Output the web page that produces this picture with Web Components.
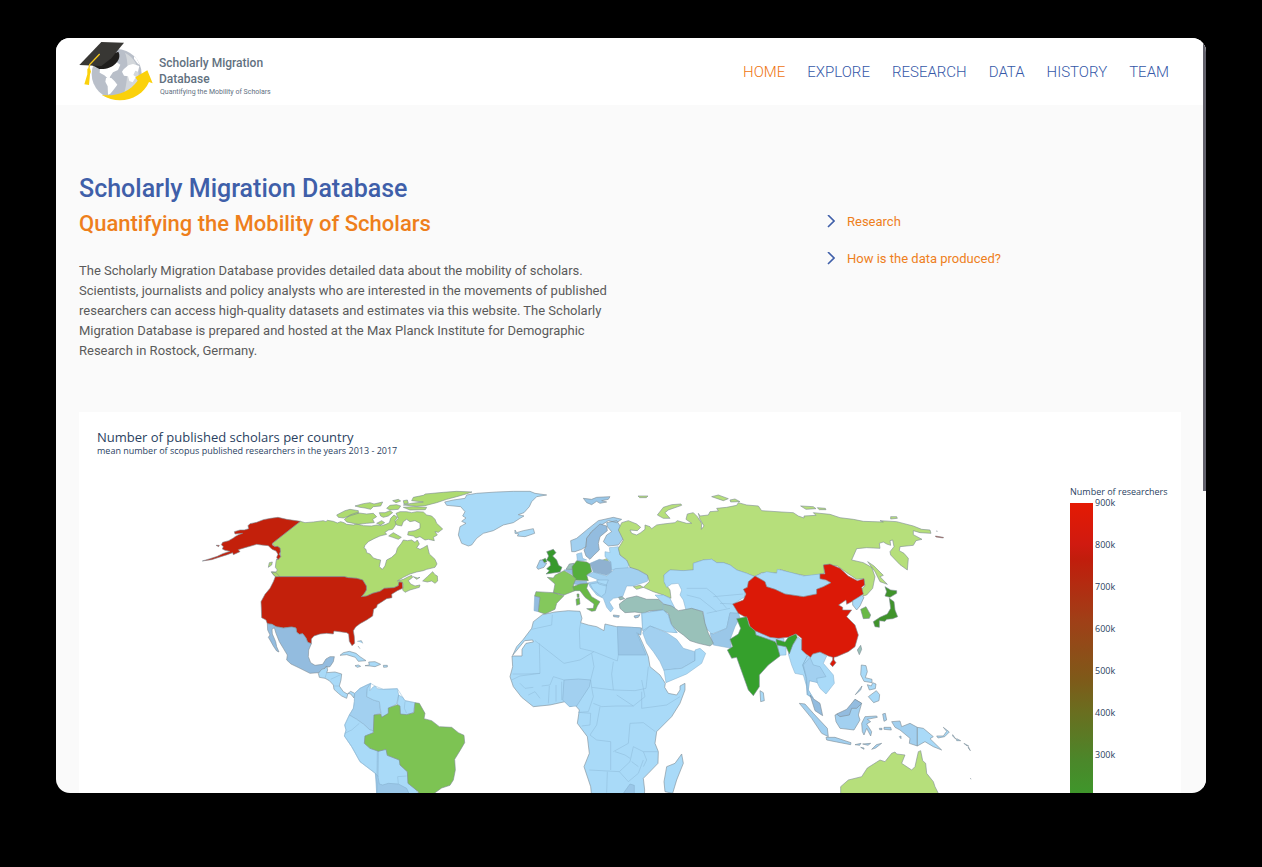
<!DOCTYPE html>
<html lang="en">
<head>
<meta charset="utf-8">
<title>Scholarly Migration Database</title>
<style>
body{margin:0;background:#000;font-family:Roboto,"Liberation Sans",sans-serif}
</style>
</head>
<body>
<smd-window>
  <smd-header slot="header">
    <smd-logo slot="logo"></smd-logo>
    <smd-nav-link current>HOME</smd-nav-link>
    <smd-nav-link>EXPLORE</smd-nav-link>
    <smd-nav-link>RESEARCH</smd-nav-link>
    <smd-nav-link>DATA</smd-nav-link>
    <smd-nav-link>HISTORY</smd-nav-link>
    <smd-nav-link>TEAM</smd-nav-link>
  </smd-header>
  <smd-intro>
    <span slot="title">Scholarly Migration Database</span>
    <span slot="subtitle">Quantifying the Mobility of Scholars</span>
    <span>The Scholarly Migration Database provides detailed data about the mobility of scholars.<br>Scientists, journalists and policy analysts who are interested in the movements of published<br>researchers can access high-quality datasets and estimates via this website. The Scholarly<br>Migration Database is prepared and hosted at the Max Planck Institute for Demographic<br>Research in Rostock, Germany.</span>
    <smd-more-link slot="links">Research</smd-more-link>
    <smd-more-link slot="links">How is the data produced?</smd-more-link>
  </smd-intro>
  <smd-map-card>
    <span slot="title">Number of published scholars per country</span>
    <span slot="subtitle">mean number of scopus published researchers in the years 2013 - 2017</span>
    <smd-world-map></smd-world-map>
    <smd-legend slot="legend" ticks="900k 800k 700k 600k 500k 400k 300k">Number of researchers</smd-legend>
  </smd-map-card>
</smd-window>

<script>
const define = (name, html, setup) => customElements.define(name, class extends HTMLElement {
  constructor() {
    super();
    this.attachShadow({ mode: 'open' }).innerHTML = html;
  }
  connectedCallback() { if (setup) setup(this, this.shadowRoot); }
});

define('smd-window', `
<style>
:host{display:block;box-sizing:border-box;height:100vh;padding:38px 56px 74px}
.frame{display:grid;grid-template-columns:minmax(0,1fr) 3px;height:100%;overflow:hidden;border-radius:14px;background:#fafafa}
.page{overflow:hidden}
main{padding:66px 22px 0 23px}
.track{background:#fafafa}
.thumb{height:60%;background:#62616b}
</style>
<div class="frame">
  <div class="page"><slot name="header"></slot><main><slot></slot></main></div>
  <div class="track"><div class="thumb"></div></div>
</div>`);

define('smd-header', `
<style>
:host{display:block;background:#fff}
header{display:flex;justify-content:space-between;align-items:center;height:67px;padding:0 34px 0 22px}
nav{display:flex;gap:22px}
</style>
<header><slot name="logo"></slot><nav aria-label="Main"><slot></slot></nav></header>`);

define('smd-nav-link', `
<style>
:host{display:block}
a{color:#3558a8;font-size:15px;line-height:20px;font-weight:300;text-decoration:none}
:host([current]) a{color:#ee7410}
</style>
<a href="#"><slot></slot></a>`, (el, root) => {
  if (el.hasAttribute('current')) root.querySelector('a').setAttribute('aria-current', 'page');
});

define('smd-logo', `
<style>
:host{display:block}
a{display:flex;align-items:center;gap:5px;color:#62717f;text-decoration:none}
svg{display:block;width:76px;height:62px}
.words{display:grid;padding-top:8px}
b{font-size:12px;line-height:16px;font-weight:500}
small{font-size:7px;line-height:10px;padding:0 0 0 1px}
</style>
<a href="#">
<svg viewBox="84 33 228 186" aria-hidden="true">
  <circle cx="200" cy="132" r="75" fill="#b9bfc9"/>
  <path d="M225 68A75 75 0 0 1 217 205C230 180 240 100 225 68Z" fill="#d3d7db"/>
  <path d="M252 78l8 8 10 20-8-6-10-14zM150 115l16-11 8 5 22-15 15 10-7 16-15 7-10 15 8 8-11-2-13-12-14-8zM168 144l16 0 10 10 8 10-10 14-11 13-7 3-1-25-7-14zM221 118l14-12 14-4 19 6-4 17-8-3-6 13 8 6-10 16-10-4-4-14-12-2-6-12z" fill="#fff"/>
  <path d="M155 195C195 200 237 188 263 152L256 142 292 121 308 160 297 156C276 205 210 229 155 195Z" fill="#fbd10b"/>
  <path d="M126 105L142 91 205 65C218 89 188 120 148 117Z" fill="#1f1e1c"/>
  <path d="M154 36L222 38 184 85 154 108 88 105Z" fill="#383734"/>
  <path d="M149 72L119 104 116 118" fill="none" stroke="#f5c71b" stroke-width="4"/>
  <path d="M112 116l8-1 3 10-3 8-3 32-14-2 9-30z" fill="#fbd10b"/>
</svg>
<span class="words"><b>Scholarly Migration</b><b>Database</b><small>Quantifying the Mobility of Scholars</small></span>
</a>`);

define('smd-intro', `
<style>
:host{display:grid;grid-template-columns:minmax(0,1fr) 354px;padding-bottom:51px}
h1,h2,p{margin:0;white-space:nowrap}
h1{color:#3f5fa9;font-size:25px;line-height:36px;font-weight:500}
h2{color:#ee7f1c;font-size:22px;line-height:34px;font-weight:500}
p{margin-top:20px;color:#5a5a5a;font-size:13px;line-height:20px}
.links{padding-top:32px}
</style>
<section><h1><slot name="title"></slot></h1><h2><slot name="subtitle"></slot></h2><p><slot></slot></p></section>
<div class="links"><slot name="links"></slot></div>`);

define('smd-more-link', `
<style>
:host{display:block}
a{display:flex;align-items:center;gap:12px;height:37px;color:#ee7f1c;font-size:13px;text-decoration:none}
svg{width:8px;height:14px}
</style>
<a href="#"><svg viewBox="0 0 8 14" aria-hidden="true"><path d="M1 0L7 6 1 12" fill="none" stroke="#3f5fa9" stroke-width="1.6"/></svg><slot></slot></a>`);

define('smd-map-card', `
<style>
:host{display:block;background:#fff;padding:18px 12px 0 18px;font-family:"Open Sans","Noto Sans",sans-serif;color:#2a3f5f}
h3,p{margin:0;font-weight:400}
h3{font-size:13px;line-height:15px}
p{font-size:9px;line-height:11px}
.chart{display:grid;grid-template-columns:minmax(0,1fr) 99px;padding-top:4px}
</style>
<h3><slot name="title"></slot></h3><p><slot name="subtitle"></slot></p>
<div class="chart"><slot></slot><slot name="legend"></slot></div>`);

define('smd-legend', `
<style>
:host{display:block;padding-top:27px;font-size:9px;white-space:nowrap}
.title{line-height:10px;padding-bottom:6px}
.scale{display:grid;grid-template-columns:23px 1fr;gap:2px}
.bar{min-height:340px;background:linear-gradient(#e41a03 0,#cf1a10 42px,#c11d0c 56px,#a03f17 117px,#7e5a19 177px,#6b6d1f 207px,#4b872a 257px,#3f962b 290px,#35a02c)}
ul{list-style:none;margin:-5px 0 0;padding:0}
li{height:42px;line-height:10px}
</style>
<div class="title"><slot></slot></div>
<div class="scale"><div class="bar"></div><ul></ul></div>`, (el, root) => {
  root.querySelector('ul').innerHTML = el.getAttribute('ticks').split(' ').map(t => `<li>${t}</li>`).join('');
});

define('smd-world-map', `
<style>
:host{display:block}
svg{display:block;width:100%}
path{stroke:#7d8b93;stroke-width:.6;stroke-linejoin:round;vector-effect:non-scaling-stroke}
.in path{stroke:#82adcb;stroke-width:.5}
.us{fill:#c3200b}.ca{fill:#aedb70}.ru{fill:#b6df7b}.mx{fill:#93bcdf}.lo{fill:#a9daf8}.l2{fill:#a2d0f0}.l3{fill:#9ac7e8}
.br{fill:#7dc353}.uk{fill:#37992c}.de{fill:#55ae3c}.fr{fill:#84c85c}.it{fill:#69b946}.tr{fill:#99c1b9}.cn{fill:#db1907}.in1{fill:#35a02c}.jp{fill:#3f932a}
.line{fill:none}
path.line{stroke:#8db9d6;stroke-width:.5}
</style>
<svg viewBox="97 460 973 370" role="img" aria-label="World map of published scholars">
<g transform="translate(190 480) scale(.33333)">
 <path class="ca" d="M331 124L345 128 370 126 400 122 408 125 412 121 430 124 442 129 452 125 462 128 470 133 490 135 500 132 520 137 545 138 560 135 575 137 588 133 598 128 602 115 612 105 622 112 615 122 620 128 615 138 608 148 596 150 585 157 590 163 570 168 552 176 535 185 525 196 522 204 528 208 530 218 540 222 550 234 562 238 572 240 568 260 577 268 585 258 590 240 605 232 618 220 622 205 634 190 640 180 652 182 665 180 675 187 682 180 688 192 680 203 690 208 700 203 712 196 714 205 718 222 735 238 741 252 735 262 710 268 700 272 680 276 660 282 640 292 622 303 640 298 655 290 665 286 668 292 655 302 662 312 675 318 690 315 688 322 660 330 645 337 638 330 640 315 637 307 627 306 625 317 612 323 583 325 570 334 548 340 530 348 514 350 523 340 529 330 529 318 518 300 500 295 475 293 463 290 256 290 248 282 244 275 258 276 262 270 256 262 258 245 260 237 264 239 272 230 270 204 262 199 255 200 247 190Z"/>
 <path class="ca" d="M712 290L728 275 735 284 742 288 743 303 735 310 725 303 712 306 698 303ZM670 290L682 294 690 292 680 298ZM618 100L630 95 650 95 665 98 680 95 700 96 710 105 725 108 735 118 740 130 758 147 745 157 735 155 742 165 730 172 733 182 715 178 705 180 690 170 678 174 670 168 653 165 655 155 675 152 690 145 690 130 675 122 660 125 650 118 640 125 635 138 620 135 615 125 625 115ZM440 105L465 92 480 88 505 92 505 100 485 106 460 114 445 112ZM463 118L480 105 500 98 530 102 550 100 560 110 548 118 553 128 530 130 505 133 480 128 470 126ZM495 78L520 71 540 68 552 72 578 66 572 78 550 80 542 88 525 84 510 82ZM568 98L585 98 600 92 608 98 595 108 580 112 572 108ZM608 62L625 58 632 63 618 68ZM590 85L600 76 620 74 632 78 625 88 600 90ZM640 62L652 60 655 70 642 72ZM560 130L575 122 584 128 572 135ZM665 62L670 52 700 46 706 42 760 37 800 34 846 36 825 43 800 50 770 58 740 68 705 77 680 79 640 75 665 70 700 66ZM640 82L670 80 710 82 706 89 660 90ZM596 168L610 158 622 165 634 172 625 178 608 172ZM235 262L238 248 247 246 245 255ZM245 277L258 278 268 288 268 300 256 290Z"/>
 <path class="us" d="M37 243L60 236 82 229 98 221 120 214 105 211 97 207 100 200 94 194 98 187 116 182 130 174 135 170 146 164 158 160 135 162 133 155 150 150 163 150 176 146 174 137 180 131 200 127 220 119 242 115 264 112 290 118 331 124 247 190 247 195 255 200 262 199 270 204 271 215 268 222 272 230 264 239 260 232 264 223 258 213 246 208 235 197 214 195 200 193 180 199 165 203 145 209 150 215 130 224 128 218 112 224 90 231 65 239ZM78 196l10 0-2 4zM256 290L463 290 475 293 500 295 518 300 529 318 529 330 523 340 514 350 530 348 548 340 570 334 583 325 612 323 625 317 627 306 637 307 638 325 622 332 605 343 606 353 590 356 575 366 562 374 560 382 551 388 548 408 530 420 510 431 497 441 490 452 493 470 494 490 486 497 478 484 476 462 470 458 455 456 432 453 430 462 410 460 390 462 372 468 364 477 364 491 353 487 348 474 338 461 328 463 320 457 318 444 305 441 280 444 258 440 246 433 232 431 228 420 215 413 214 385 213 365 225 343 240 325 250 305Z"/>
 <path class="mx" d="M232 431L246 433 258 440 280 444 305 441 318 444 320 457 328 463 338 461 348 474 353 487 364 491 356 510 355 530 362 548 375 556 398 553 408 537 420 530 433 530 430 545 420 560 405 562 400 575 385 578 360 580 330 565 303 552 290 540 292 525 280 505 268 485 258 460 253 443 246 448 247 462 257 485 260 500 267 516 260 513 250 498 240 480 235 472 240 465 233 450Z"/>
</g>
<g transform="translate(310 630) scale(.33333)">
 <path class="lo" d="M25 130L35 118 45 115 50 108 53 120 50 128 75 126 95 132 93 150 88 168 100 185 112 192 122 184 134 190 132 204 122 192 114 190 110 205 95 198 85 190 72 178 70 165 58 152 45 145 28 142ZM90 76L100 68 118 64 138 70 150 80 168 92 145 94 136 82 110 74ZM165 107L178 105 176 96 195 95 212 103 195 110 180 108ZM135 107l10-2 7 4-10 3zM220 106l12 0 0 5-11 1zM142 34l12-2 4 8M144 48l6 8"/>
 <g class="in">
 <path class="l2" d="M134 190L150 175 170 165 182 160 172 175 170 200 190 210 208 215 212 250 192 255 190 302 180 300 160 282 140 268 118 255 130 235 133 215Z"/>
 <path class="lo" d="M182 160L180 182 188 172 195 168 202 176 220 178 262 176 266 195 260 222 235 235 240 252 215 262 208 215 190 210 170 200 172 175ZM266 195L278 202 285 212 315 218 310 248 290 254 272 255 268 230 262 222ZM118 255L140 268 160 282 180 300 190 302 188 310 165 318 163 340 180 355 205 362 204 440 196 430 150 395 125 350 103 318 108 300 104 285ZM202 364L228 358 232 376 268 390 270 405 292 425 294 460 318 478 340 520 200 520Z"/>
 <path class="l3" d="M196 430L204 440 208 462 218 465 235 460 265 462 290 475 310 520 202 520Z"/></g>
 <path class="br" d="M192 255L212 252 215 262 235 250 235 234 262 224 270 228 271 252 290 254 312 248 315 218 328 220 345 250 342 266 365 272 388 290 425 292 445 308 462 316 464 338 450 362 434 388 436 420 430 450 420 466 395 474 370 492 360 520 330 520 325 485 294 460 292 425 270 405 268 390 232 376 228 358 205 364 180 355 163 340 165 318 190 308Z"/>
 <path class="line" d="M134 190L150 175 182 160 195 168 220 178 262 176 285 212 315 218M134 190L133 215 130 235 118 255 104 285 108 300 103 318 125 350 150 395 196 430 202 460 202 500M104 310L125 300 148 280M263 440L265 462M263 440L290 438M285 215L283 235 290 250M45 145L50 128M62 148L92 134M72 168L88 168"/>
</g>
<g transform="translate(440 480) scale(.33333)">
 <path class="lo" d="M14 66L40 60 75 55 80 45 110 40 170 36 220 34 270 34 285 40 320 45 290 50 275 65 268 80 252 98 235 104 252 108 240 115 220 128 190 135 160 152 130 160 110 175 95 195 85 198 65 190 55 165 60 140 78 130 65 124 78 114 68 108 75 95 62 80 20 76ZM225 150L230 158 250 152 280 146 284 160 255 170 232 168 236 162 225 160Z"/>
 <path class="l3" d="M430 55L455 58 470 52 510 50 505 58 485 62 500 66 480 70 470 64 455 74 440 68Z"/>
 <path class="ru" d="M594 48l30 0-5 5-20 0zM484 242l16-6 6 8z"/>
 <path class="uk" d="M320 215L340 208 348 218 338 228 350 240 356 256 366 262 360 276 318 282 328 272 320 266 332 256 330 246 320 240 326 228ZM306 240l10-5 5 10-9 3z"/>
 <path class="l2" d="M290 262L300 240 308 240 312 248 320 250 312 262 294 268ZM395 215L392 182 410 175 440 150 475 122 520 112 545 118 530 128 505 122 480 138 455 155 440 175 438 200 425 208 405 215ZM500 128L530 122 545 145 550 175 535 195 505 198 490 185 500 165 515 155 502 140Z"/>
 <path class="mx" d="M455 155L480 132 500 138 502 152 480 170 475 190 478 210 462 225 450 238 438 228 432 210 438 200 440 175Z"/>
 <g class="in">
 <path class="l2" d="M412 242L410 222 425 218 428 235 440 240 420 243Z"/>
 <path class="lo" d="M508 203L535 200 540 225 570 250 560 268 515 270 512 245 495 230 495 215 510 218Z"/>
 <path class="l2" d="M440 285L460 276 500 288 525 266 580 262 625 288 622 304 580 318 560 318 548 350 520 355 508 366 520 385 512 396 500 382 490 355 470 345 450 320 445 308 480 302Z"/>
 <path class="lo" d="M450 312L475 308 500 315 496 340 484 350 460 330ZM470 300L505 300 498 318 476 312Z"/>
 <path class="mx" style="fill:#8fb1d0" d="M450 250L478 238 512 245 515 275 500 286 460 276Z"/>
 <path class="mx" d="M372 270L398 268 400 285ZM395 312L402 302 440 304 442 310 418 314ZM284 348L300 352 295 395 282 392Z"/></g>
 <path class="tr" d="M378 268L388 252 402 250 398 268Z"/>
 <path class="de" d="M396 260L410 242 440 246 450 252 455 275 440 285 445 302 400 300Z"/>
 <path class="fr" d="M322 292L340 294 345 286 372 272 395 285 408 296 400 315 405 332 372 345 340 338 345 312ZM288 335L340 338 372 347 350 370 345 388 315 402 295 395 300 352 284 348Z"/>
 <path class="it" d="M398 320L420 312 445 310 440 325 455 350 480 365 472 378 466 392 455 394 440 386 460 385 462 372 435 352 420 332 402 332ZM408 358l10-4 2 18-10 4zM411 342l6 0 0 10-5 0z"/>
 <path class="l3" d="M520 405l18 2-2 5-15-2zM582 408l18-4-5 8-10 2z"/>
</g>
<g transform="translate(600 480) scale(.33333)">
 <path class="ru" d="M65 128L85 122 110 132 122 142 112 152 90 150 95 160 110 165 122 158 135 148 135 135 150 140 155 146 170 135 190 132 225 128 232 122 260 130 275 130 258 118 262 102 280 98 292 110 305 130 304 148 312 138 300 118 295 100 300 108 325 105 330 95 355 93 350 85 380 82 410 76 415 68 440 75 475 78 485 92 545 96 580 98 595 108 612 114 612 108 648 106 640 98 690 103 720 113 760 118 790 124 850 126 840 122 890 125 940 138 965 148 990 150 993 160 960 158 940 152 940 164 966 178 948 182 940 196 900 200 898 212 912 220 925 235 922 270 900 254 872 225 870 215 882 200 878 180 870 182 872 196 860 192 850 186 838 190 840 205 800 203 770 206 755 240 790 248 815 262 825 290 818 325 800 345 790 348 782 330 795 318 790 296 770 298 740 278 712 258 672 254 673 280 650 285 620 288 590 282 570 278 540 268 530 278 510 280 485 278 465 290 440 280 410 270 390 255 370 248 350 248 335 238 310 240 280 250 280 270 250 272 210 270 192 285 195 310 210 330 213 355 190 345 160 335 130 322 148 305 142 285 115 270 90 262 80 240 60 225 55 205 70 180 55 150ZM172 105L190 82 215 74 243 72 245 76 205 90 195 98 210 115 190 115ZM335 50L355 45 385 56 370 62ZM390 60L405 57 420 65 392 66ZM602 78L640 80 648 86 618 88ZM652 83l24 2 2 4-20 0zM872 110l18 0 2 5-20 2zM100 320l20-4 10 6-20 6zM803 245L822 258 850 286 840 290 862 313 840 305 825 275Z"/>
 <path class="us" d="M1006 168l24 4 0 2-22-3zM1008 153l5 1"/>
 <g class="in">
 <path class="lo" d="M192 285L210 270 250 272 280 270 280 250 310 240 335 238 350 248 370 248 390 255 410 270 440 280 465 290 460 310 435 325 435 350 400 372 412 385 415 400 390 400 380 445 335 462 315 440 310 395 285 388 258 390 250 360 240 345 245 330 235 310 215 312 200 322 192 305ZM165 345L190 345 210 355 225 385 195 375ZM130 408L150 395 190 388 205 405 215 435 232 458 200 452 165 440 130 460Z"/>
 <path class="l3" d="M330 460L340 462 380 445 390 398 415 400 420 412 405 440 390 480 395 505 340 495Z"/></g>
 <path class="tr" d="M58 372L80 355 110 348 140 358 175 358 190 372 215 378 235 392 275 385 308 395 315 430 325 460 340 490 330 498 295 490 270 482 250 465 232 452 215 435 205 400 188 390 150 392 130 400 105 396 75 398 60 385ZM56 352l10-2 8 6-14 4z"/>
 <path class="line" d="M260 325L320 325 345 345 380 385M260 345L300 355 350 395M340 350L430 342M360 370L400 372M320 400L390 385M150 395L145 425 200 450M188 370L190 390"/>
</g>
<g transform="translate(500 600) scale(.33333)">
 <path class="lo" d="M127 44L165 36 205 32 240 34 246 55 242 68 265 75 290 80 312 92 315 72 350 80 395 82 425 84 422 105 414 100 428 130 445 170 450 200 480 225 496 250 494 262 505 280 530 285 540 270 540 258 555 250 555 270 540 310 515 350 470 395 465 430 475 455 474 490 445 520 430 535 434 570 430 640 280 640 272 560 252 500 268 460 262 410 232 370 238 330 225 315 210 320 195 305 150 315 100 320 65 292 40 260 30 230 38 200 36 168 66 168 66 148 78 130 100 126 98 120 74 122 38 166 50 140 70 118 95 85 100 65ZM545 462L550 490 530 540 518 580 495 575 492 545 500 500 525 490Z"/>
 <g class="in">
 <path class="lo" d="M425 40L455 35 490 30 505 45 512 70 530 98 500 96 450 78 428 92Z"/>
 <path class="l2" d="M428 98L450 78 500 98 530 118 550 145 585 155 585 182 545 205 500 210 492 212 480 185 460 155 440 130Z"/>
 <path class="lo" d="M492 210L545 205 585 182 585 150 600 145 617 160 605 190 560 222 498 248Z"/>
 <path class="l3" d="M352 80L395 82 422 84 422 105 410 98 438 165 355 165ZM370 580L390 552 403 556 403 620 330 620Z"/>
 <path class="l2" d="M192 240L235 237 272 240 268 260 245 295 230 318 208 320 188 300Z"/></g>
 <path class="line" d="M242 68L238 90 240 145 282 155 352 183 355 165M157 44L155 75 95 88M105 122L192 190 240 180 282 155M118 130L120 220 80 222 38 222M120 220L60 228 35 240M272 240L282 200 275 160M335 222L340 185M272 240L275 262 340 270 335 222M340 270L405 272 438 265 445 200M425 240L435 290 400 318 350 285M275 262L280 290 265 335 235 337M280 310L305 320 350 318 400 318M425 325L500 315 540 290M300 320L290 375 270 405 290 420 332 425 332 510M390 370L385 430 340 455M235 337L272 340 270 375 245 378M390 370L430 368 466 395M268 510L358 515 390 485 400 440 430 455 474 455M322 515L320 578M358 515L385 545 415 520 430 480M415 500L395 485M185 245L185 300M168 255L168 305M148 258L145 310M60 250L75 265 100 262M85 285L105 275 120 295M125 258L150 255 160 230 192 240M425 275L425 325M430 455L440 480 430 500M425 40L428 92M345 455L375 465 390 475"/>
</g>
<g transform="translate(720 550) scale(.33333)">
 <g class="in">
 <path class="lo" d="M105 78L140 65 170 70 172 58 215 68 250 78 300 72 300 86 333 98 310 110 290 118 290 132 250 140 195 132 165 118 140 110 135 95ZM105 242L165 262 192 266 192 274 165 275 108 255ZM172 282L198 290 198 315 178 316Z"/>
 <path class="lo" d="M205 312L218 285 235 262 245 270 246 300 262 318 248 345 258 380 262 435 260 410 250 375 225 370 215 345ZM262 318L300 306 320 318 310 340 340 375 343 400 318 432 300 415 290 395 268 392 265 420 280 445 262 435 258 380 248 345Z"/>
 <path class="l2" d="M250 345L270 322 280 345 300 350 318 380 290 385 292 398 268 392 265 420 280 445 264 435 260 385Z"/></g>
 <path class="cn" d="M105 78L135 95 140 110 165 118 195 132 250 140 290 132 290 118 310 110 333 98 318 90 300 86 300 72 315 72 310 45 330 42 360 55 385 78 412 92 432 86 434 105 425 112 430 132 405 150 380 163 378 150 356 165 368 172 368 180 395 180 380 200 405 225 415 255 405 290 385 305 350 320 342 322 342 330 348 338 338 350 330 342 338 330 338 322 325 318 300 306 278 312 272 322 258 312 245 300 245 265 228 252 205 262 175 265 150 262 105 242 90 230 82 205 55 190 38 162 70 150 78 132 70 118 82 112 85 95Z"/>
 <path class="in1" d="M50 206L80 200 88 228 105 242 108 255 165 275 170 282 180 318 145 345 118 375 118 410 100 437 85 420 60 350 50 322 35 325 22 300 38 290 30 268 55 252 62 235ZM168 268L195 276 205 262 228 252 232 262 218 285 208 312 198 290 170 285Z"/>
 <path class="lo" d="M120 422L130 428 133 452 122 455ZM398 152L425 136 432 142 420 168 410 180 398 165ZM424 345l14 2 4 18-6 18 20 5 0 10-24-4-10-20zM442 404l12 4 4-10 10 4-2 14-18 4zM445 440l24-18 10 12-2 18-16 6z"/>
 <path class="l2" d="M238 460L255 462 280 490 322 535 325 560 305 550 275 505ZM406 434l20-26-4 12z"/>
 <path class="mx" d="M270 435L278 445 300 460 308 497 285 482Z"/>
 <path class="tr" d="M412 300L422 286 425 298 418 314Z"/>
 <path class="it" d="M422 178L438 170 452 195 448 205 430 206Z"/>
 <path class="jp" d="M495 110L512 120 530 122 530 130 510 142 495 138 500 125ZM508 145L522 155 525 180 533 200 518 206 500 208 495 214 478 212 478 232 465 230 460 215 480 202 502 192 512 175Z"/>
</g>
<g transform="translate(780 640) scale(.33333)">
 <path class="l2" d="M138 292L165 292 213 308 212 314 170 306 140 300ZM165 225L205 212 225 178 245 190 235 225 240 240 222 270 180 265 168 245ZM245 250L255 230 290 228 292 232 262 238 272 245 260 252 275 275 272 288 260 265 252 285 247 275ZM308 222l8-2 4 20-8 4zM312 262l20 0 2 8-22-2zM298 265l8 0 0 4-7 0zM225 314l18-4-4 6zM248 312l24-2-8 6zM242 322l10 2 0 4zM275 328l14-14 16-4-18 14zM358 290l5-2 0 8zM335 245L360 243 365 260 390 250 412 262 412 318 388 310 390 295 360 270 345 262Z"/>
 <path class="mx" d="M170 222L200 208 225 178 245 190 230 205 215 205 208 225 180 230Z"/>
 <path class="lo" d="M412 262L430 265 460 290 450 296 485 330 460 320 435 305 412 318ZM470 288l20 0 10-14-10-12 18 14-14 14-20 4zM518 284l10 14-10-10zM530 296l12 6-12 0zM552 310l14 8-8-2zM565 320l6 12-6-8z"/>
 <path class="ru" d="M182 500L182 440 205 420 245 410 262 384 300 360 315 365 335 340 345 336 350 342 375 345 365 370 395 390 405 380 415 335 422 332 428 362 437 370 440 400 460 425 465 440 480 470 480 500Z"/>
 <path class="l2" d="M571 414l2 4"/>
</g>
</svg>`);
</script>
</body>
</html>
